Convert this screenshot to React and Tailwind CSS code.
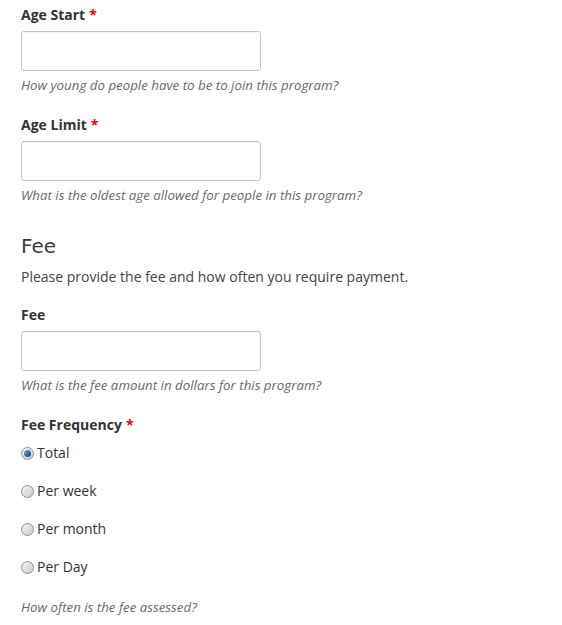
import { useState } from "react";

const FREQUENCIES = ["Total", "Per week", "Per month", "Per Day"];

function Label({ children, required }) {
  return (
    <div className="h-5 text-[14px] leading-5 font-bold text-[#333]">
      {children}
      {required && <span className="ml-1 text-[#e00]">*</span>}
    </div>
  );
}

function Help({ children }) {
  return (
    <p className="mt-[5px] h-[18px] text-[13.3px] leading-[18px] italic text-[#6a6a6a]">
      {children}
    </p>
  );
}

function TextField({ label, required, help }) {
  return (
    <div>
      <Label required={required}>{label}</Label>
      <input
        type="text"
        className="mt-[6px] block h-10 w-[240px] rounded-[3px] border border-[#c4c4c4] bg-white px-2 text-sm outline-none shadow-[inset_0_1px_1px_rgba(0,0,0,0.04)]"
      />
      <Help>{help}</Help>
    </div>
  );
}

function Radio({ checked, label, onClick }) {
  return (
    <button
      type="button"
      onClick={onClick}
      className="flex h-5 items-center text-[14px] leading-5 text-[#333]"
    >
      <span className="flex h-[13px] w-[13px] items-center justify-center rounded-full border border-[#8e8e8e] bg-gradient-to-br from-[#f6f6f6] to-[#cbcbcb]">
        {checked && (
          <span className="h-[7px] w-[7px] rounded-full bg-gradient-to-br from-[#5ab4e6] to-[#0b3f6b]" />
        )}
      </span>
      <span className="ml-[3px]">{label}</span>
    </button>
  );
}

export default function App() {
  const [freq, setFreq] = useState("Total");

  return (
    <div
      className="min-h-screen bg-white px-[21px] pt-[5px]"
      style={{ fontFamily: '"Open Sans", "Noto Sans", sans-serif' }}
    >
      <TextField
        label="Age Start"
        required
        help="How young do people have to be to join this program?"
      />
      <div className="mt-[21px]">
        <TextField
          label="Age Limit"
          required
          help="What is the oldest age allowed for people in this program?"
        />
      </div>

      {/* Fee section */}
      <h2
        className="mt-[28px] h-7 text-[20px] leading-7 text-[#3a3a3a]"
        style={{ fontFamily: '"DejaVu Sans", sans-serif' }}
      >
        Fee
      </h2>
      <p className="mt-[7px] text-[14px] leading-5 text-[#444]">
        Please provide the fee and how often you require payment.
      </p>

      <div className="mt-[18px]">
        <TextField
          label="Fee"
          help="What is the fee amount in dollars for this program?"
        />
      </div>

      <div className="mt-[21px]">
        <Label required>Fee Frequency</Label>
        <div className="mt-[8px] flex flex-col gap-[18px]">
          {FREQUENCIES.map((f) => (
            <Radio
              key={f}
              label={f}
              checked={freq === f}
              onClick={() => setFreq(f)}
            />
          ))}
        </div>
        <p className="mt-[21px] h-[18px] text-[13.3px] leading-[18px] italic text-[#6a6a6a]">
          How often is the fee assessed?
        </p>
      </div>
    </div>
  );
}
